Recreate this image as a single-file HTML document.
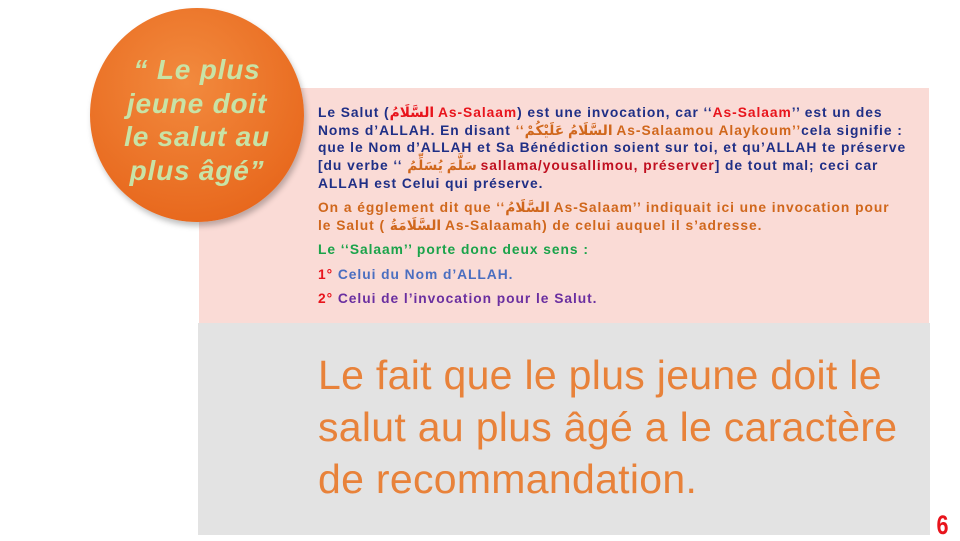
<!DOCTYPE html>
<html><head><meta charset="utf-8"><style>
body{margin:0;width:960px;height:540px;background:#fff;position:relative;overflow:hidden;font-family:"Liberation Sans","DejaVu Sans",sans-serif}
.pink{position:absolute;left:199px;top:88px;width:730px;height:236px;background:#fadbd6}
.gray{position:absolute;left:198px;top:323px;width:732px;height:212px;background:#e3e3e3}
.circle{position:absolute;left:90px;top:8px;width:214px;height:214px;border-radius:50%;background:radial-gradient(circle at 45% 35%,#f28a3e,#e8691e 75%,#d85c16);box-shadow:2px 4px 6px rgba(0,0,0,.25)}
.ct{position:absolute;left:80px;top:53px;width:234px;text-align:center;color:#c8e3a6;font-weight:bold;font-style:italic;font-size:28px;letter-spacing:.8px;line-height:33.5px}
.t{position:absolute;left:318px;font-size:13.8px;letter-spacing:.95px;font-weight:bold;white-space:nowrap;color:#1f2f86;line-height:17.7px}
.r{color:#e8141c}.o{color:#d0671c}.dr{color:#c01020}
.big{position:absolute;left:318px;top:349px;color:#e8823a;font-size:41px;line-height:52px;letter-spacing:.3px;white-space:nowrap}
.n{position:absolute;left:935px;top:510px;color:#e8141c;font-weight:bold;font-size:27px;transform:scaleX(.8)}
</style></head><body>
<div class="pink"></div>
<div class="gray"></div>
<div class="circle"></div>
<div class="ct">“ Le plus<br>jeune doit<br>le salut au<br>plus âgé”</div>
<div class="t" style="top:104px">Le Salut (<span class="r">السَّلَامُ As-Salaam</span>) est une invocation, car ‘‘<span class="r">As-Salaam</span>’’ est un des<br>Noms d’ALLAH. En disant <span class="o">‘‘السَّلَامُ عَلَيْكُمْ  As-Salaamou Alaykoum’’</span>cela signifie :<br>que le Nom d’ALLAH et Sa Bénédiction soient sur toi, et qu’ALLAH te préserve<br>[du verbe ‘‘ <span class="o">سَلَّمَ يُسَلِّمُ</span> <span class="dr">sallama/yousallimou, préserver</span>] de tout mal; ceci car<br>ALLAH est Celui qui préserve.</div>
<div class="t o" style="top:199px;color:#d0671c">On a égglement dit que ‘‘السَّلَامُ  As-Salaam’’ indiquait ici une invocation pour<br>le Salut ( السَّلَامَةُ As-Salaamah) de celui auquel il s’adresse.</div>
<div class="t" style="top:241px;color:#1aa34a">Le ‘‘Salaam’’ porte donc deux sens :</div>
<div class="t" style="top:266px;color:#4a6ec0"><span class="r">1°</span> Celui du Nom d’ALLAH.</div>
<div class="t" style="top:290px;color:#6a2fa0"><span class="r">2°</span> Celui de l’invocation pour le Salut.</div>
<div class="big">Le fait que le plus jeune doit le<br>salut au plus âgé a le caractère<br>de recommandation.</div>
<div class="n">6</div>
</body></html>
